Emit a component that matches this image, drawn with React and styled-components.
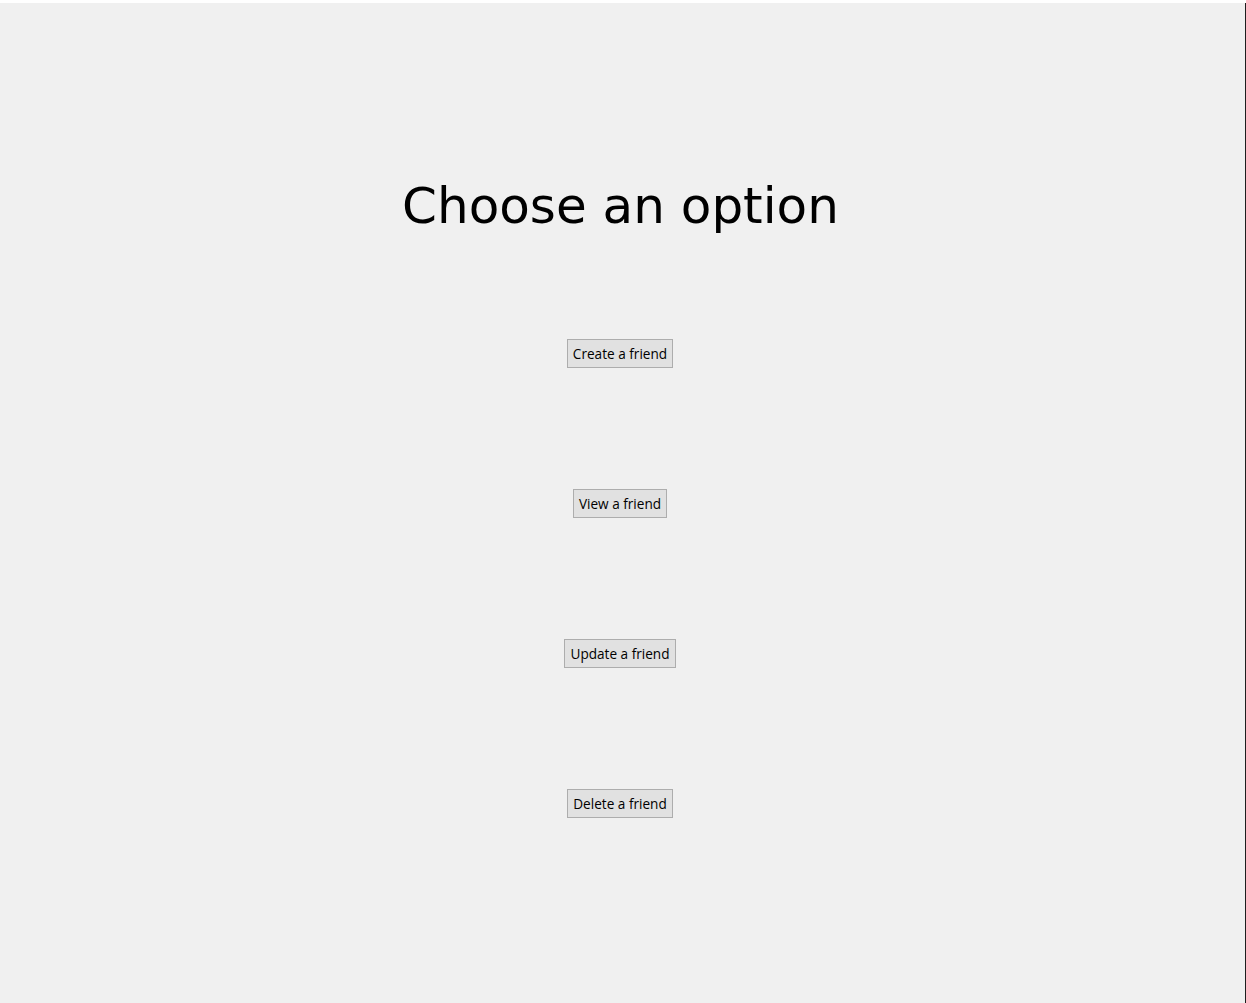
import React from "react";
import styled, {createGlobalStyle} from "styled-components";

const options = ["Create a friend", "View a friend", "Update a friend", "Delete a friend"];

function App() {
  return (
    <>
      <GlobalStyle/>
      <Window>
        <Content>
          <Title>Choose an option</Title>
          <Options>
            {options.map((label) => (
              <OptionButton key={label} type="button">{label}</OptionButton>
            ))}
          </Options>
        </Content>
      </Window>
    </>
  );
}

const GlobalStyle = createGlobalStyle`
    html, body {
        margin: 0;
        padding: 0;
        background: #ffffff;
    }
    body {
        padding-top: 3px;
    }
`;
const Window = styled.div`
    width: 1245px;
    height: 1000px;
    background: #f0f0f0;
    border-right: 1px solid #1e1e1e;
    overflow: hidden;
`;
const Content = styled.div`
    width: 1240px;
    display: flex;
    flex-direction: column;
    align-items: center;
    padding-top: 173px;
`;
const Title = styled.h1`
    margin: 0 0 0 1px;
    font-family: "DejaVu Sans", Verdana, sans-serif;
    font-weight: normal;
    font-size: 50px;
    line-height: 60px;
    color: #000;
`;
const Options = styled.div`
    display: flex;
    flex-direction: column;
    align-items: center;
    gap: 121px;
    margin-top: 103px;
`;
const OptionButton = styled.button`
    height: 29px;
    padding: 0 5px;
    margin: 0;
    border: 1px solid #adadad;
    border-radius: 0;
    background: #e1e1e1;
    color: #000;
    font-family: "Open Sans", "Noto Sans", sans-serif;
    font-size: 13.6px;
    line-height: 27px;
`;

export default App;
